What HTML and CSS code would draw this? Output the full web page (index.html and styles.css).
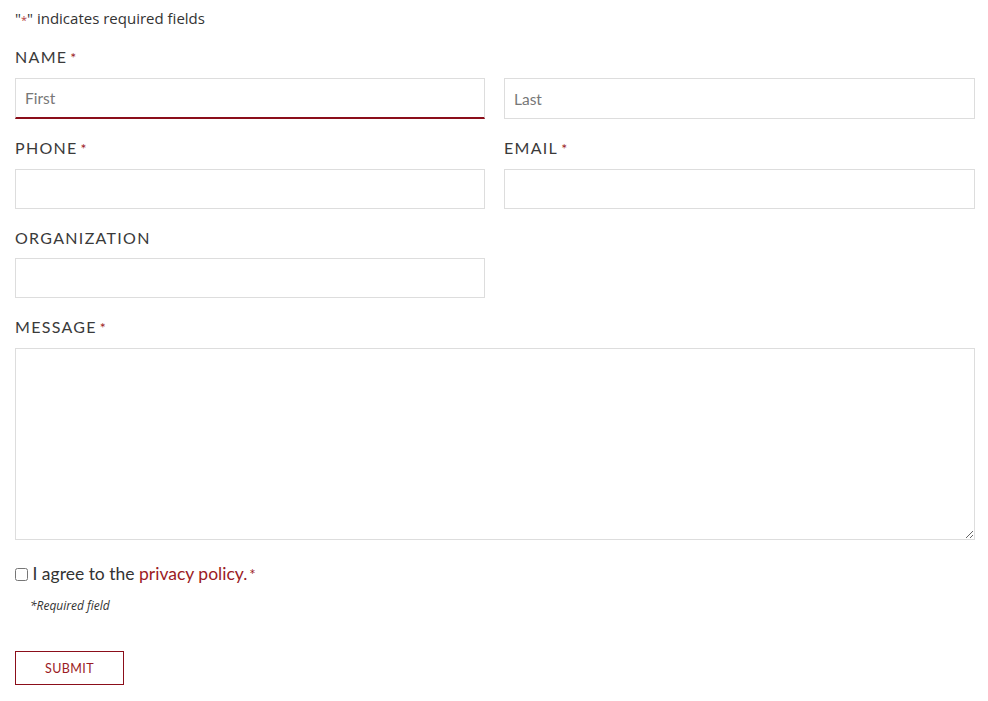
FILE: index.html
```html
<!DOCTYPE html>
<html lang="en">
<head>
<meta charset="utf-8">
<title>Contact form</title>
<link rel="stylesheet" href="styles.css">
</head>
<body>
<form class="form">
  <p class="note">"<span class="req">*</span>" indicates required fields</p>
  <div class="row">
    <div class="field full">
      <div class="label">NAME<span class="req">*</span></div>
      <div class="pair">
        <input class="input focus" type="text" placeholder="First">
        <input class="input" type="text" placeholder="Last">
      </div>
    </div>
  </div>
  <div class="row two">
    <div class="field">
      <div class="label">PHONE<span class="req">*</span></div>
      <input class="input" type="text">
    </div>
    <div class="field">
      <div class="label">EMAIL<span class="req">*</span></div>
      <input class="input" type="text">
    </div>
  </div>
  <div class="row two">
    <div class="field">
      <div class="label">ORGANIZATION</div>
      <input class="input" type="text">
    </div>
  </div>
  <div class="row">
    <div class="field">
      <div class="label">MESSAGE<span class="req">*</span></div>
      <textarea class="textarea"></textarea>
    </div>
  </div>
  <label class="consent"><input type="checkbox" class="check"> I agree to the <a class="link" href="#">privacy policy.</a><span class="req">*</span></label>
  <p class="hint">*Required field</p>
  <button type="button" class="submit">SUBMIT</button>
</form>
</body>
</html>
```
FILE: styles.css
```css
html, body {
  margin: 0;
  padding: 0;
  background: #fff;
}
body {
  font-family: "Open Sans", "Liberation Sans", sans-serif;
  color: #333;
}
.form {
  width: 960px;
  padding: 8px 0 0 15px;
}
.note {
  margin: 0 0 16px 0;
  font-size: 15px;
  line-height: 20px;
  color: #333;
}
.note .req {
  color: #b33a3a;
  font-size: 11px;
}
.req {
  color: #9b1b24;
  margin-left: 4px;
}
.note .req { margin-left: 0; }
.row {
  margin-bottom: 18px;
}
.row.two {
  display: grid;
  grid-template-columns: 470px 471px;
  column-gap: 19px;
}
.field {
  display: flex;
  flex-direction: column;
}
.label {
  font-family: "Lato", "Noto Sans", sans-serif;
  font-size: 16px;
  line-height: 22px;
  letter-spacing: 1.3px;
  color: #3a3a3a;
  margin-bottom: 9px;
}
.label .req {
  font-size: 14px;
  margin-left: 3px;
}
.pair {
  display: grid;
  grid-template-columns: 470px 471px;
  column-gap: 19px;
}
.input {
  box-sizing: border-box;
  height: 40px;
  width: 100%;
  margin: 0;
  border: 1px solid #ddd;
  border-radius: 0;
  padding: 0 9px;
  font-family: "Lato", "Noto Sans", sans-serif;
  font-size: 15.5px;
  color: #333;
  background: #fff;
  outline: none;
}
.input::placeholder {
  color: #777;
}
.input.focus {
  height: 41px;
  border-bottom: 2px solid #8b0e1a;
}
.pair .input { height: 41px; }
.textarea {
  box-sizing: border-box;
  display: block;
  width: 960px;
  height: 192px;
  margin: 0;
  border: 1px solid #ddd;
  border-radius: 0;
  resize: vertical;
  outline: none;
}
.consent {
  display: flex;
  align-items: center;
  margin-top: 23px;
  font-family: "Lato", "Noto Sans", sans-serif;
  font-size: 17.5px;
  line-height: 22px;
  color: #333;
  white-space: pre;
}
.check {
  margin: 0;
  width: 13px;
  height: 13px;
}
.link {
  color: #9b1b24;
  text-decoration: none;
}
.consent .req {
  margin-left: 2px;
  font-size: 15px;
}
.hint {
  margin: 13px 0 0 15px;
  font-family: "Open Sans", sans-serif;
  font-style: italic;
  font-size: 12px;
  line-height: 16px;
  color: #333;
}
.submit {
  display: block;
  margin-top: 37px;
  box-sizing: border-box;
  width: 109px;
  height: 34px;
  border: 1px solid #8b0e1a;
  background: #fff;
  color: #9b1b24;
  font-family: "Lato", "Noto Sans", sans-serif;
  font-size: 12.5px;
  letter-spacing: 0.4px;
  padding: 0;
}
```
